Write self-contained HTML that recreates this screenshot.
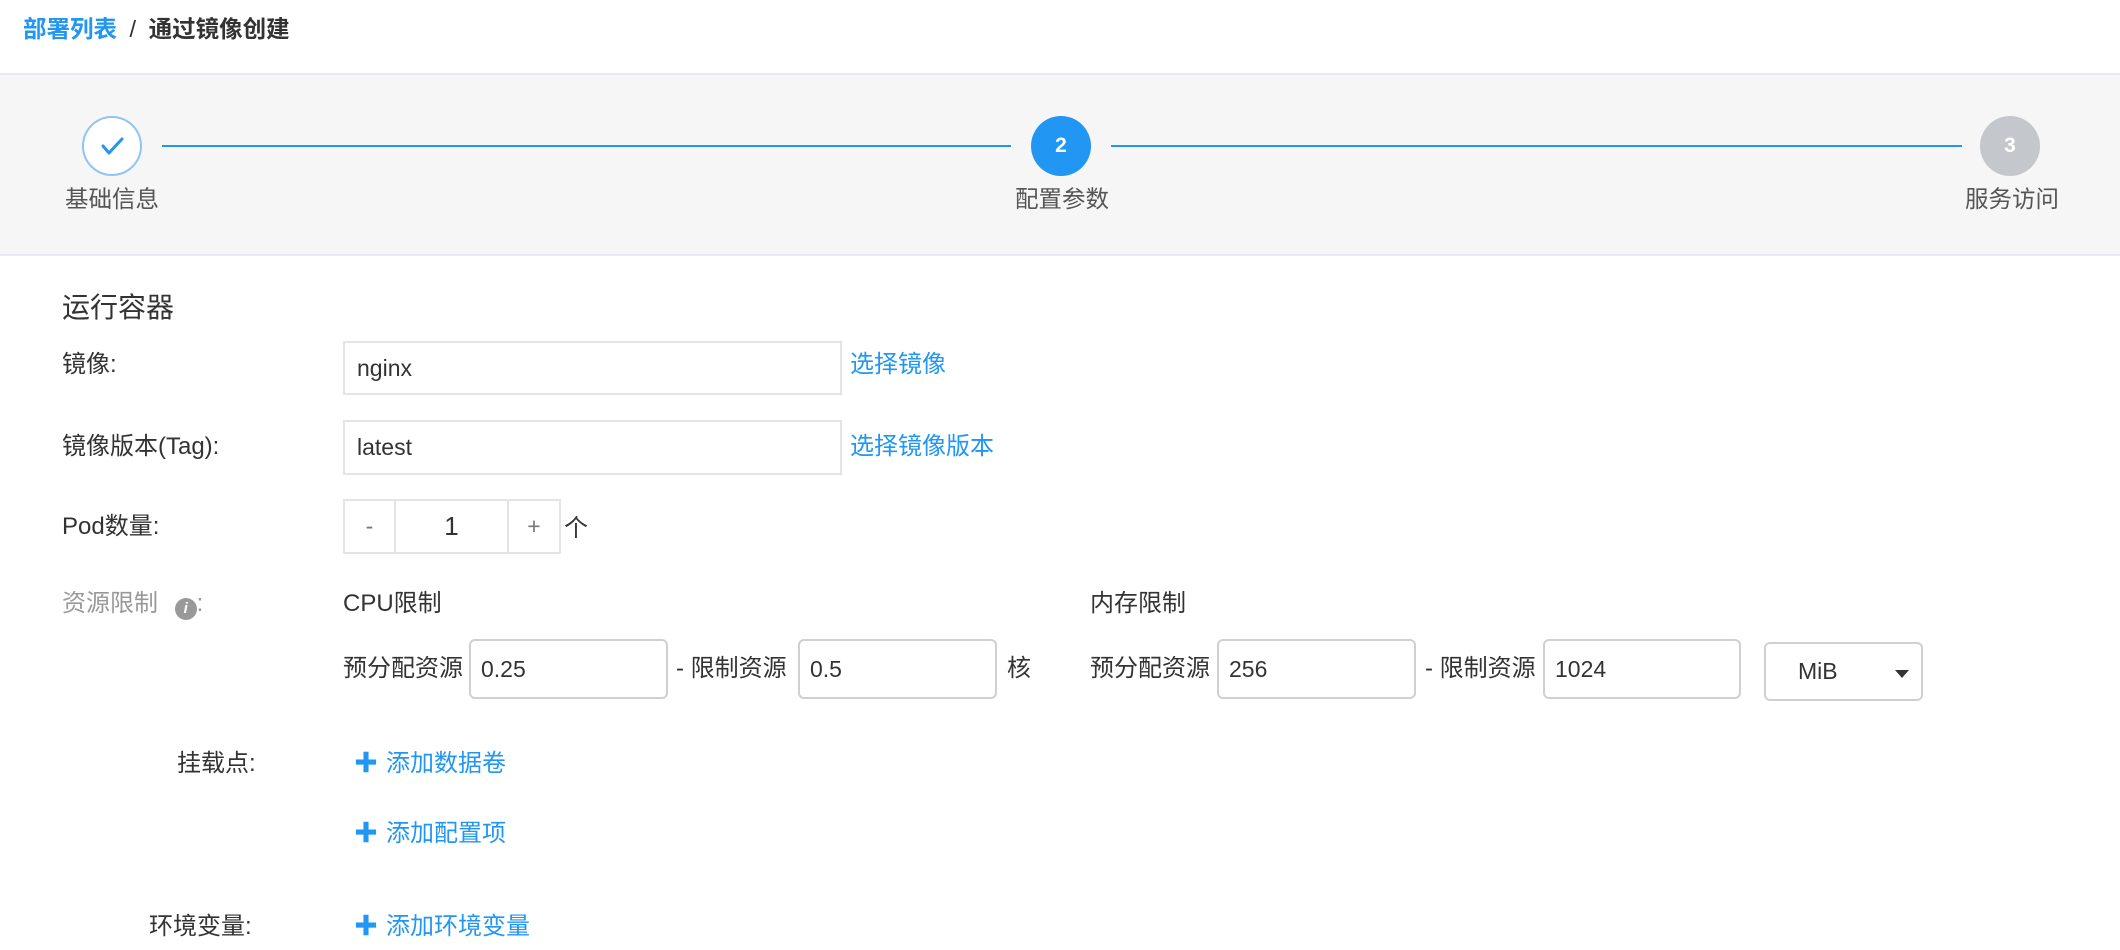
<!DOCTYPE html>
<html><head><meta charset="utf-8"><style>
*{box-sizing:border-box;margin:0;padding:0}
body{width:2120px;height:950px;background:#fff;font-family:"Liberation Sans","Noto Sans CJK SC",sans-serif;color:#333;font-size:24px;position:relative;overflow:hidden}
.a{position:absolute;white-space:nowrap;line-height:1}
.blue{color:#2196f3}
.in{position:absolute;border:2px solid #e4e4e4;background:#fff;font-size:23px;line-height:1;padding-left:12px;display:flex;align-items:center;color:#333}
.r{border:2px solid #d0d0d0;border-radius:6px}
.circ{position:absolute;width:60px;height:60px;border-radius:50%;display:flex;align-items:center;justify-content:center;color:#fff;font-weight:bold;font-size:21px}
.line{position:absolute;height:2px;background:#2196f3;top:145px}
.lbl{position:absolute;top:188px;font-size:23.5px;color:#555;line-height:1}
.plus{font-weight:bold;margin-right:8px}
</style></head><body>
<div class="a" style="left:23px;top:18px;font-size:23.5px;font-weight:bold"><span class="blue">部署列表</span> <span style="color:#333;font-weight:normal;margin:0 6px">/</span> <span>通过镜像创建</span></div>
<div style="position:absolute;left:0;top:73px;width:2120px;height:183px;background:#f6f6f6;border-top:2px solid #e6e9f0;border-bottom:2px solid #e6e9f0"></div>
<div class="line" style="left:162px;width:849px"></div>
<div class="line" style="left:1111px;width:851px"></div>
<div class="circ" style="left:82px;top:116px;background:#fff;border:2px solid #90c4f5"><svg width="30" height="30" viewBox="0 0 30 30"><path d="M6 15 L12 22 L25 8" fill="none" stroke="#2196f3" stroke-width="3" stroke-linecap="round" stroke-linejoin="round"/></svg></div>
<div class="circ" style="left:1031px;top:116px;background:#2196f3">2</div>
<div class="circ" style="left:1980px;top:116px;background:#c4c7cc">3</div>
<div class="lbl" style="left:65px">基础信息</div>
<div class="lbl" style="left:1015px">配置参数</div>
<div class="lbl" style="left:1965px">服务访问</div>

<div class="a" style="left:62px;top:294px;font-size:28px">运行容器</div>
<div class="a" style="left:62px;top:353px">镜像:</div>
<div class="in" style="left:343px;top:341px;width:499px;height:54px">nginx</div>
<div class="a blue" style="left:850px;top:353px">选择镜像</div>
<div class="a" style="left:62px;top:435px">镜像版本(Tag):</div>
<div class="in" style="left:343px;top:420px;width:499px;height:55px">latest</div>
<div class="a blue" style="left:850px;top:435px">选择镜像版本</div>
<div class="a" style="left:62px;top:515px">Pod数量:</div>
<div style="position:absolute;left:343px;top:499px;width:218px;height:55px;border:2px solid #e4e4e4;display:flex;font-size:23px">
<div style="width:51px;border-right:2px solid #e4e4e4;display:flex;align-items:center;justify-content:center;color:#777">-</div>
<div style="width:113px;border-right:2px solid #e4e4e4;display:flex;align-items:center;justify-content:center;font-size:26px">1</div>
<div style="flex:1;display:flex;align-items:center;justify-content:center;color:#777">+</div></div>
<div class="a" style="left:564px;top:517px">个</div>
<div class="a" style="left:62px;top:592px;color:#999">资源限制 <span style="display:inline-block;width:22px;height:22px;border-radius:50%;background:#999;color:#fff;font-size:15px;text-align:center;line-height:22px;font-style:italic;font-weight:bold;margin-left:10px;vertical-align:-2px">i</span>:</div>
<div class="a" style="left:343px;top:592px">CPU限制</div>
<div class="a" style="left:1090px;top:592px">内存限制</div>
<div class="a" style="left:343px;top:657px">预分配资源</div>
<div class="in r" style="left:469px;top:639px;width:199px;height:60px;padding-left:10px">0.25</div>
<div class="a" style="left:676px;top:657px">- 限制资源</div>
<div class="in r" style="left:798px;top:639px;width:199px;height:60px;padding-left:10px">0.5</div>
<div class="a" style="left:1007px;top:657px">核</div>
<div class="a" style="left:1090px;top:657px">预分配资源</div>
<div class="in r" style="left:1217px;top:639px;width:199px;height:60px;padding-left:10px">256</div>
<div class="a" style="left:1425px;top:657px">- 限制资源</div>
<div class="in r" style="left:1543px;top:639px;width:198px;height:60px;padding-left:10px">1024</div>
<div class="in r" style="left:1764px;top:642px;width:159px;height:59px;padding-left:32px">MiB<span style="position:absolute;right:12px;top:26px;width:0;height:0;border-left:7px solid transparent;border-right:7px solid transparent;border-top:8px solid #333"></span></div>
<div class="a" style="left:177px;top:752px">挂载点:</div>
<div class="a blue" style="left:354px;top:752px"><span class="plus">✚</span>添加数据卷</div>
<div class="a blue" style="left:354px;top:822px"><span class="plus">✚</span>添加配置项</div>
<div class="a" style="left:149px;top:915px">环境变量:</div>
<div class="a blue" style="left:354px;top:915px"><span class="plus">✚</span>添加环境变量</div>
</body></html>
